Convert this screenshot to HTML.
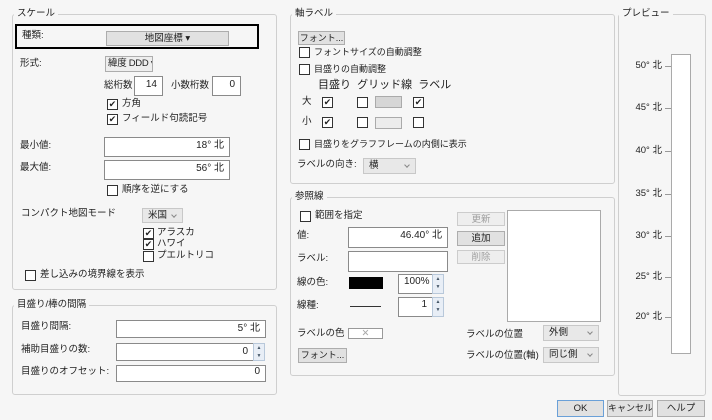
<!DOCTYPE html>
<html><head><meta charset="utf-8"><style>
*{box-sizing:border-box}
body{margin:0;width:712px;height:420px;background:#f6f6f6;font-family:"Liberation Sans","Noto Sans CJK JP",sans-serif;font-size:9.5px;color:#222;position:relative;overflow:hidden}
div,span{position:absolute;white-space:nowrap}
.g{border:1px solid #cfcfcf;border-radius:3px}
.lg{background:#f6f6f6;padding:0 3px;line-height:12px}
.t{line-height:12px}
.in{background:#fff;border:1px solid #8a8a8a;text-align:right;padding:1px 5px;line-height:14px;font-size:10px}
.btn{background:#e1e1e1;border:1px solid #adadad;text-align:center;line-height:13px;overflow:hidden}
.dis{color:#a0a0a0;background:#eee;border-color:#ccc}
.cb{width:11px;height:11px;border:1px solid #333;background:#fff;font-size:9px;line-height:9px;text-align:center}
.dd{background:#e8e8e8;border:1px solid #c8c8c8;padding-left:5px;line-height:13px}
.dd:after{content:"";position:absolute;right:6px;top:4px;width:3px;height:3px;border-right:1px solid #888;border-bottom:1px solid #888;transform:rotate(45deg)}
.sp{width:12px;background:#e8eef6;border:1px solid #b8c8da;font-size:5px;line-height:8px;text-align:center;color:#456}
.tk{width:6px;height:1px;background:#999}
.pl{text-align:right;width:40px;line-height:12px}
</style></head><body>

<div class="g" style="left:12px;top:14px;width:265px;height:276px"></div>
<div class="lg" style="left:14px;top:8px">スケール</div>
<div style="left:15px;top:24px;width:244px;height:25px;border:2px solid #000"></div>
<div class="t" style="left:22px;top:30px">種類:</div>
<div class="btn" style="left:106px;top:31px;width:123px;height:15px">地図座標 ▾</div>
<div class="t" style="left:20px;top:58px">形式:</div>
<div class="btn" style="left:105px;top:56px;width:48px;height:16px;background:#eee;text-align:left;padding-left:2px;letter-spacing:-0.3px">緯度 DDD ▾</div>
<div class="t" style="left:104px;top:80px">総桁数</div>
<div class="in" style="left:134px;top:76px;width:29px;height:20px">14</div>
<div class="t" style="left:171px;top:80px">小数桁数</div>
<div class="in" style="left:212px;top:76px;width:29px;height:20px">0</div>
<div class="cb" style="left:107px;top:99px">✔</div><div class="t" style="left:122px;top:98px">方角</div>
<div class="cb" style="left:107px;top:114px">✔</div><div class="t" style="left:122px;top:113px">フィールド句読記号</div>
<div class="t" style="left:20px;top:140px">最小値:</div>
<div class="in" style="left:104px;top:137px;width:126px;height:20px">18° 北</div>
<div class="t" style="left:20px;top:162px">最大値:</div>
<div class="in" style="left:104px;top:160px;width:126px;height:20px">56° 北</div>
<div class="cb" style="left:107px;top:185px"></div><div class="t" style="left:122px;top:184px">順序を逆にする</div>
<div class="t" style="left:21px;top:208px">コンパクト地図モード</div>
<div class="dd" style="left:142px;top:208px;width:41px;height:15px">米国</div>
<div class="cb" style="left:143px;top:228px">✔</div><div class="t" style="left:157px;top:227px">アラスカ</div>
<div class="cb" style="left:143px;top:239px">✔</div><div class="t" style="left:157px;top:238px">ハワイ</div>
<div class="cb" style="left:143px;top:251px"></div><div class="t" style="left:157px;top:250px">プエルトリコ</div>
<div class="cb" style="left:25px;top:270px"></div><div class="t" style="left:40px;top:269px">差し込みの境界線を表示</div>

<div class="g" style="left:12px;top:305px;width:265px;height:90px"></div>
<div class="lg" style="left:14px;top:299px">目盛り/棒の間隔</div>
<div class="t" style="left:21px;top:321px">目盛り間隔:</div>
<div class="in" style="left:116px;top:320px;width:150px;height:18px">5° 北</div>
<div class="t" style="left:21px;top:344px">補助目盛りの数:</div>
<div class="in" style="left:116px;top:343px;width:138px;height:18px">0</div>
<div class="sp" style="left:253px;top:343px;height:18px">▲<br>▼</div>
<div class="t" style="left:21px;top:366px">目盛りのオフセット:</div>
<div class="in" style="left:116px;top:365px;width:150px;height:17px;line-height:10px">0</div>

<div class="g" style="left:290px;top:14px;width:325px;height:170px"></div>
<div class="lg" style="left:292px;top:8px">軸ラベル</div>
<div class="btn" style="left:298px;top:31px;width:47px;height:14px;font-size:9px">フォント...</div>
<div class="cb" style="left:299px;top:47px"></div><div class="t" style="left:314px;top:46px;font-size:9px">フォントサイズの自動調整</div>
<div class="cb" style="left:299px;top:64px"></div><div class="t" style="left:314px;top:63px;font-size:9px">目盛りの自動調整</div>
<div class="t" style="left:318px;top:79px;font-size:11px">目盛り&nbsp; グリッド線&nbsp; ラベル</div>
<div class="t" style="left:302px;top:96px">大</div>
<div class="cb" style="left:322px;top:97px">✔</div><div class="cb" style="left:357px;top:97px"></div>
<div style="left:375px;top:96px;width:27px;height:12px;background:#d6d6d6;border:1px solid #aaa"></div>
<div class="cb" style="left:413px;top:97px">✔</div>
<div class="t" style="left:302px;top:116px">小</div>
<div class="cb" style="left:322px;top:117px">✔</div><div class="cb" style="left:357px;top:117px"></div>
<div style="left:375px;top:117px;width:27px;height:12px;background:#ececec;border:1px solid #aaa"></div>
<div class="cb" style="left:413px;top:117px"></div>
<div class="cb" style="left:299px;top:139px"></div><div class="t" style="left:314px;top:138px;font-size:9px">目盛りをグラフフレームの内側に表示</div>
<div class="t" style="left:297px;top:159px">ラベルの向き:</div>
<div class="dd" style="left:363px;top:158px;width:53px;height:16px">横</div>

<div class="g" style="left:290px;top:197px;width:325px;height:179px"></div>
<div class="lg" style="left:292px;top:191px">参照線</div>
<div class="cb" style="left:300px;top:211px"></div><div class="t" style="left:315px;top:210px">範囲を指定</div>
<div class="t" style="left:297px;top:230px">値:</div>
<div class="in" style="left:348px;top:227px;width:100px;height:21px">46.40° 北</div>
<div class="btn dis" style="left:457px;top:212px;width:48px;height:14px">更新</div>
<div class="btn" style="left:457px;top:231px;width:48px;height:15px">追加</div>
<div class="btn dis" style="left:457px;top:250px;width:48px;height:14px">削除</div>
<div style="left:507px;top:210px;width:94px;height:112px;background:#fff;border:1px solid #aaa"></div>
<div class="t" style="left:297px;top:253px">ラベル:</div>
<div class="in" style="left:348px;top:251px;width:100px;height:21px"></div>
<div class="t" style="left:297px;top:277px">線の色:</div>
<div style="left:349px;top:277px;width:34px;height:12px;background:#000"></div>
<div class="in" style="left:398px;top:274px;width:35px;height:20px;line-height:12px">100%</div>
<div class="sp" style="left:432px;top:274px;height:20px">▲<br>▼</div>
<div class="t" style="left:297px;top:300px">線種:</div>
<div style="left:350px;top:306px;width:31px;height:1px;background:#333"></div>
<div class="in" style="left:398px;top:297px;width:35px;height:20px;line-height:12px">1</div>
<div class="sp" style="left:432px;top:297px;height:20px">▲<br>▼</div>
<div class="t" style="left:297px;top:328px">ラベルの色</div>
<div style="left:348px;top:328px;width:35px;height:11px;background:#fff;border:1px solid #999;text-align:center;color:#aaa;line-height:9px">✕</div>
<div class="t" style="left:466px;top:329px">ラベルの位置</div>
<div class="dd" style="left:543px;top:325px;width:56px;height:16px">外側</div>
<div class="btn" style="left:298px;top:348px;width:49px;height:15px;font-size:9px">フォント...</div>
<div class="t" style="left:466px;top:350px">ラベルの位置(軸)</div>
<div class="dd" style="left:543px;top:347px;width:56px;height:16px">同じ側</div>

<div class="g" style="left:618px;top:14px;width:88px;height:382px"></div>
<div class="lg" style="left:619px;top:8px">プレビュー</div>
<div style="left:671px;top:54px;width:20px;height:300px;background:#fff;border:1px solid #aaa"></div>
<div class="pl" style="left:622px;top:60px">50° 北</div><div class="tk" style="left:665px;top:66px"></div>
<div class="pl" style="left:622px;top:102px">45° 北</div><div class="tk" style="left:665px;top:108px"></div>
<div class="pl" style="left:622px;top:145px">40° 北</div><div class="tk" style="left:665px;top:151px"></div>
<div class="pl" style="left:622px;top:188px">35° 北</div><div class="tk" style="left:665px;top:194px"></div>
<div class="pl" style="left:622px;top:230px">30° 北</div><div class="tk" style="left:665px;top:236px"></div>
<div class="pl" style="left:622px;top:271px">25° 北</div><div class="tk" style="left:665px;top:277px"></div>
<div class="pl" style="left:622px;top:311px">20° 北</div><div class="tk" style="left:665px;top:317px"></div>

<div class="btn" style="left:557px;top:400px;width:47px;height:17px;border-color:#6aa0d8;line-height:15px">OK</div>
<div class="btn" style="left:607px;top:400px;width:46px;height:17px;line-height:15px;font-size:9px">キャンセル</div>
<div class="btn" style="left:657px;top:400px;width:48px;height:17px;line-height:15px">ヘルプ</div>
</body></html>
